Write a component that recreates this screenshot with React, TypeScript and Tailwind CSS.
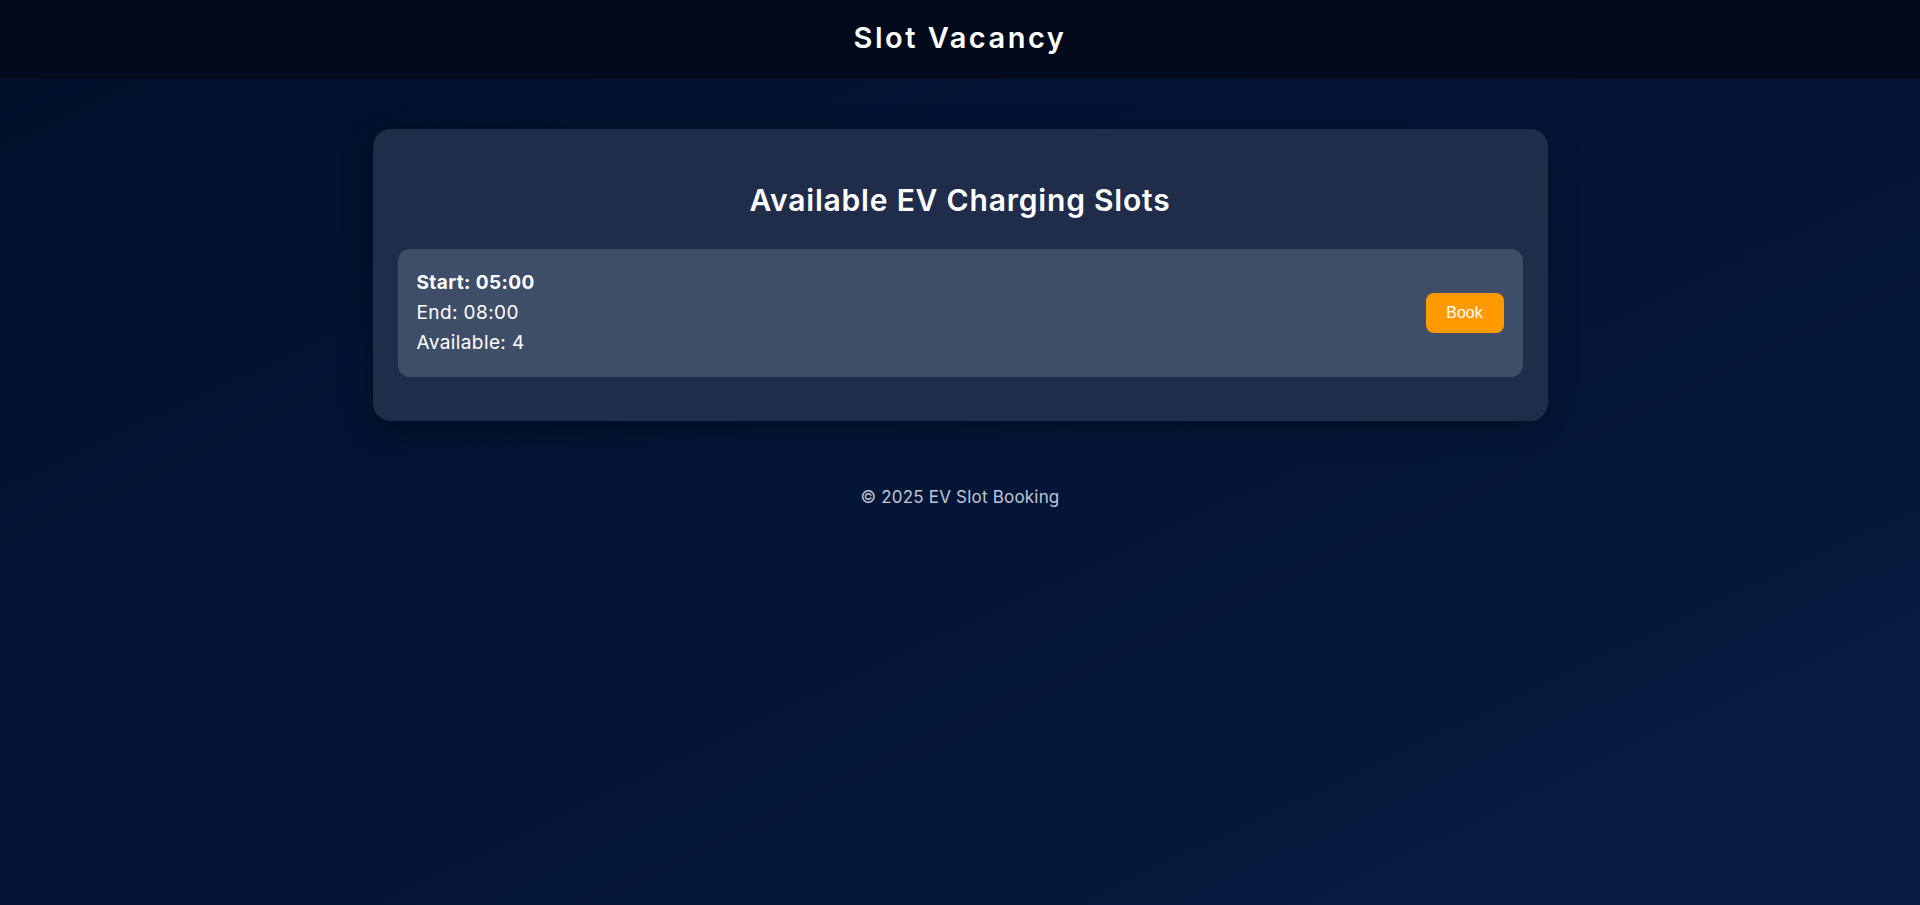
import React from 'react';

const slots = [{ start: '05:00', end: '08:00', available: 4 }];

export default function App() {
  return (
    <div
      className="min-h-[905px] bg-gradient-to-br from-[#020f2b] to-[#071b42] text-white"
      style={{ fontFamily: 'Inter, "Noto Sans", sans-serif' }}
    >
      <header className="h-[79px] bg-[#020a1c] flex items-center justify-center">
        <h1 className="text-[29px] font-semibold tracking-[2.5px] pb-[4px]">Slot Vacancy</h1>
      </header>

      <main className="flex flex-col items-center pt-[50px]">
        <section className="w-[1175px] bg-[#1f2d4a] rounded-[18px] shadow-[0_8px_30px_rgba(0,0,0,0.35)] px-[25px] pt-[53px] pb-[44px]">
          <h2 className="text-center text-[30px] font-semibold tracking-[0.8px] leading-[36px] mb-[31px]">
            Available EV Charging Slots
          </h2>
          {slots.map((s) => (
            <div
              key={s.start}
              className="h-[128px] bg-[#3f4e68] rounded-[12px] pl-[19px] pr-[19px] flex items-center justify-between"
            >
              <div className="text-[19px] leading-[30px] tracking-[0.4px]">
                <div className="font-bold">Start: {s.start}</div>
                <div>End: {s.end}</div>
                <div>Available: {s.available}</div>
              </div>
              <button
                className="w-[78px] h-[40px] rounded-[8px] bg-[#ff9900] text-white text-[16px]"
                style={{ fontFamily: '"Liberation Sans", Arial, sans-serif' }}
              >
                Book
              </button>
            </div>
          ))}
        </section>

        <footer className="mt-[64px] text-[17px] tracking-[0.2px] text-[#c0c6d3]">© 2025 EV Slot Booking</footer>
      </main>
    </div>
  );
}
